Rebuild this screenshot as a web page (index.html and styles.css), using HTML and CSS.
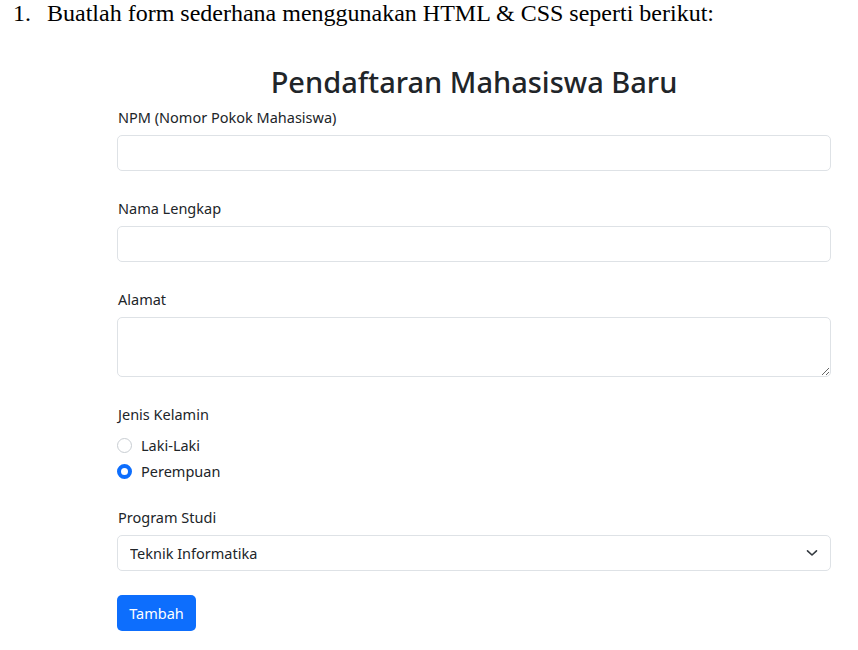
FILE: index.html
```html
<!DOCTYPE html>
<html lang="id">
<head>
<meta charset="utf-8">
<title>Pendaftaran Mahasiswa Baru</title>
<link rel="stylesheet" href="styles.css">
</head>
<body>
<div class="task">
  <span class="task-num">1.</span>
  <span class="task-text">Buatlah form sederhana menggunakan HTML &amp; CSS seperti berikut:</span>
</div>
<form class="form">
  <h2 class="title">Pendaftaran Mahasiswa Baru</h2>
  <div class="group">
    <label class="label" for="npm">NPM (Nomor Pokok Mahasiswa)</label>
    <input class="control" id="npm" type="text">
  </div>
  <div class="group">
    <label class="label" for="nama">Nama Lengkap</label>
    <input class="control" id="nama" type="text">
  </div>
  <div class="group">
    <label class="label" for="alamat">Alamat</label>
    <textarea class="control area" id="alamat"></textarea>
  </div>
  <div class="group group-radio">
    <div class="label">Jenis Kelamin</div>
    <label class="radio-row"><input class="radio" type="radio" name="jk"> Laki-Laki</label>
    <label class="radio-row"><input class="radio" type="radio" name="jk" checked> Perempuan</label>
  </div>
  <div class="group">
    <label class="label" for="prodi">Program Studi</label>
    <div class="select-wrap">
      <select class="control select" id="prodi">
        <option>Teknik Informatika</option>
      </select>
      <svg class="chev" width="12" height="8" viewBox="0 0 12 8"><path d="M1.5 1.8 L6 6 L10.5 1.8" fill="none" stroke="#343a40" stroke-width="1.6" stroke-linecap="round" stroke-linejoin="round"/></svg>
    </div>
  </div>
  <button type="button" class="btn">Tambah</button>
</form>
</body>
</html>
```
FILE: styles.css
```css
html, body {
  margin: 0;
  padding: 0;
  background: #ffffff;
}
.task {
  display: flex;
  padding: 0 0 0 13px;
  font-family: "Liberation Serif", "Times New Roman", serif;
  font-size: 24px;
  line-height: 26px;
  color: #000;
}
.task-num {
  width: 34px;
}
.form {
  width: 714px;
  margin: 0 0 0 117px;
  padding-top: 38px;
  font-family: "Noto Sans", "Open Sans", sans-serif;
  color: #212529;
}
.title {
  margin: 0 0 7px 0;
  text-align: center;
  font-size: 29px;
  line-height: 36px;
  font-weight: 500;
}
.group {
  margin-bottom: 27px;
}
.group-radio {
  margin-bottom: 23px;
}
.label {
  display: block;
  font-size: 14.5px;
  line-height: 20px;
  margin-bottom: 8px;
  padding-left: 1px;
}
.control {
  display: block;
  box-sizing: border-box;
  width: 100%;
  height: 36px;
  margin: 0;
  padding: 6px 12px;
  font-family: inherit;
  font-size: 14.5px;
  color: #212529;
  background: #fff;
  border: 1px solid #dee2e6;
  border-radius: 5px;
  outline: none;
}
.area {
  height: 60px;
  resize: vertical;
}
.radio-row {
  display: flex;
  align-items: center;
  gap: 9px;
  font-size: 14.5px;
  line-height: 20px;
  height: 26px;
}
.radio {
  appearance: none;
  -webkit-appearance: none;
  margin: 0;
  width: 15px;
  height: 15px;
  border-radius: 50%;
  border: 1px solid #c8cdd2;
  background: #fff;
  box-sizing: border-box;
}
.radio:checked {
  border: 4px solid #0d6efd;
  background: #fff;
}
.select-wrap {
  position: relative;
}
.select {
  appearance: none;
  -webkit-appearance: none;
}
.chev {
  position: absolute;
  right: 13px;
  top: 14px;
  pointer-events: none;
}
.btn {
  display: block;
  box-sizing: border-box;
  width: 79px;
  height: 36px;
  margin-top: -3px;
  padding: 0;
  font-family: inherit;
  font-size: 14.5px;
  color: #fff;
  background: #0d6efd;
  border: none;
  border-radius: 5px;
}
```
